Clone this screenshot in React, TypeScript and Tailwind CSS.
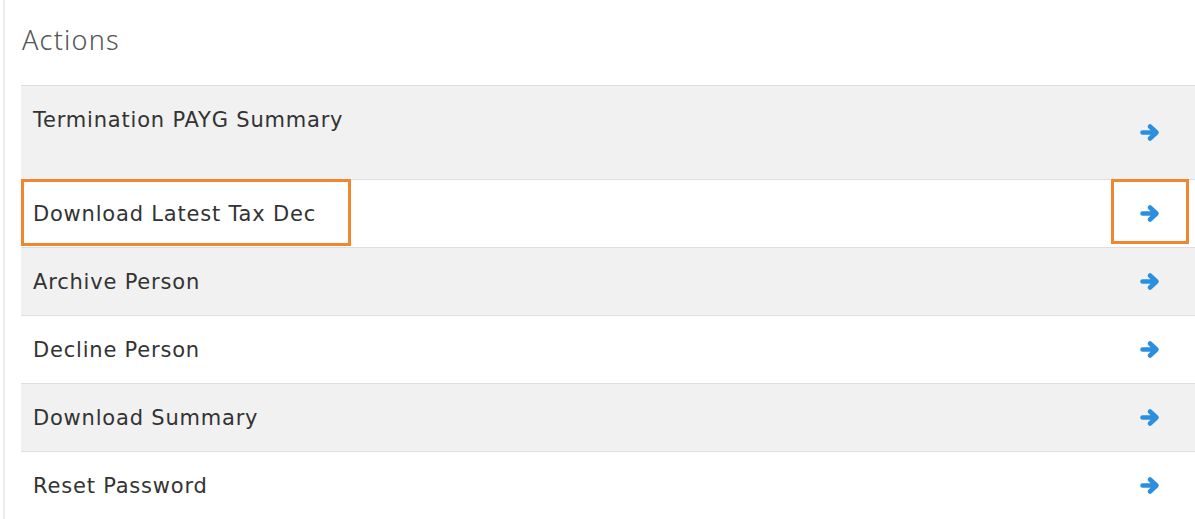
import React from "react";

const rows = [
  "Termination PAYG Summary",
  "Download Latest Tax Dec",
  "Archive Person",
  "Decline Person",
  "Download Summary",
  "Reset Password",
];

function Arrow() {
  return (
    <svg width="20" height="19" viewBox="0 0 20 19" fill="none">
      <path
        d="M2.5 9.5H15.5M10 3.5L16.5 9.5L10 15.5"
        stroke="#2b8fdf"
        strokeWidth="4.6"
        strokeLinecap="round"
        strokeLinejoin="round"
      />
    </svg>
  );
}

export default function App() {
  return (
    <div
      className="w-[1195px] h-[519px] overflow-hidden bg-white flex"
      style={{ fontFamily: '"DejaVu Sans", "Noto Sans", sans-serif' }}
    >
      <div className="w-[3px] shrink-0" />
      <div className="w-[2px] shrink-0 bg-[#ededed]" />
      <div className="flex-1 pl-[16px] pt-[22px]">
        <h2
          className="text-[27px] leading-[36px] font-light text-[#555] pl-[1px]"
          style={{ fontFamily: '"Noto Sans", sans-serif', letterSpacing: "1.2px" }}
        >
          Actions
        </h2>
        <div className="mt-[27px] border-t border-[#dedede] relative">
          {rows.map((r, i) => (
            <div
              key={r}
              className={`relative flex border-b border-[#dedede] ${
                i % 2 === 0 ? "bg-[#f1f1f1]" : "bg-white"
              } ${i === 0 ? "h-[94px]" : "h-[68px]"}`}
            >
              <div className="flex-1 pl-[12px] pt-[21px] text-[21px] leading-[26px] text-[#333] tracking-[0.8px]">
                {r}
              </div>
              <div className="w-[88px] flex items-center justify-center pr-[2px]">
                <Arrow />
              </div>
              {i === 1 && (
                <>
                  <div className="absolute left-0 top-[-1px] w-[330px] h-[67px] border-[3px] border-[#f0862e]" />
                  <div className="absolute left-[1090px] top-[-1px] w-[78px] h-[65px] border-[3px] border-[#f0862e]" />
                </>
              )}
            </div>
          ))}
        </div>
      </div>
    </div>
  );
}
